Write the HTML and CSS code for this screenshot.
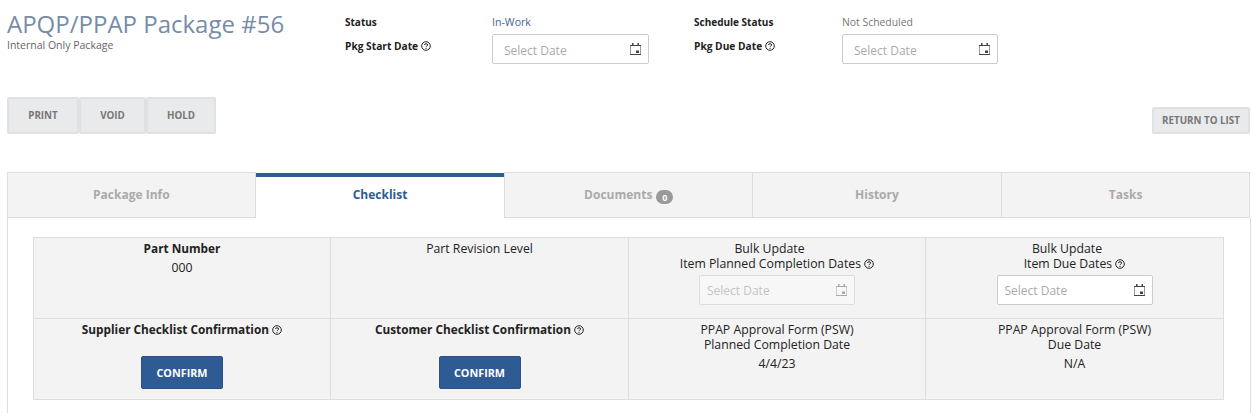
FILE: index.html
```html
<!DOCTYPE html>
<html lang="en">
<head>
<meta charset="utf-8">
<title>APQP/PPAP Package #56</title>
<link rel="stylesheet" href="styles.css">
</head>
<body>
<svg class="sprites" width="0" height="0" aria-hidden="true">
  <symbol id="cal" viewBox="0 0 11 12">
    <path d="M.5 2.500h10v9H.5z" fill="none" stroke="currentColor" stroke-opacity=".55"/>
    <path d="M0 2h11v1H0zM2 0h1.500v2H2zM7.500 0H9v2H7.500zM0 11h11v1H0zM6 7.500h3V10H6z" fill="currentColor"/>
  </symbol>
  <symbol id="help" viewBox="0 0 10 10">
    <circle cx="5" cy="5" r="4.300" fill="none" stroke="currentColor" stroke-width="1"/>
    <path d="M3.500 4C3.500 2.300 6.600 2.300 6.600 4 6.600 5.100 5 5 5 6.200" fill="none" stroke="currentColor" stroke-width="1"/>
    <circle cx="5" cy="7.500" r=".6" fill="currentColor"/>
  </symbol>
</svg>
<header class="top">
  <div class="heading">
    <h1>APQP/PPAP Package #56</h1>
    <p>Internal Only Package</p>
  </div>
  <div class="meta">
    <span class="label row1">Status</span>
    <span class="value status row1">In-Work</span>
    <span class="label row1">Schedule Status</span>
    <span class="value row1">Not Scheduled</span>
    <span class="label">Pkg Start Date <svg class="help"><use href="#help"/></svg></span>
    <div class="date wide"><span>Select Date</span><svg class="cal"><use href="#cal"/></svg></div>
    <span class="label">Pkg Due Date <svg class="help"><use href="#help"/></svg></span>
    <div class="date wide"><span>Select Date</span><svg class="cal"><use href="#cal"/></svg></div>
  </div>
</header>
<div class="actions">
  <div class="group">
    <button class="btn">PRINT</button>
    <button class="btn">VOID</button>
    <button class="btn">HOLD</button>
  </div>
  <button class="btn return">RETURN TO LIST</button>
</div>
<nav class="tabs">
  <a class="tab">Package Info</a>
  <a class="tab active">Checklist</a>
  <a class="tab">Documents <span class="badge">0</span></a>
  <a class="tab">History</a>
  <a class="tab">Tasks</a>
</nav>
<main class="panel">
  <div class="table">
    <div class="cell cell-top"><strong>Part Number</strong><div class="line">000</div></div>
    <div class="cell cell-top">Part Revision Level</div>
    <div class="cell cell-top"><span class="bulk">Bulk Update</span><br>Item Planned Completion Dates <svg class="help"><use href="#help"/></svg>
      <div class="date small disabled"><span>Select Date</span><svg class="cal"><use href="#cal"/></svg></div>
    </div>
    <div class="cell cell-top"><span class="bulk">Bulk Update</span><br>Item Due Dates <svg class="help"><use href="#help"/></svg>
      <div class="date small"><span>Select Date</span><svg class="cal"><use href="#cal"/></svg></div>
    </div>
    <div class="cell"><strong>Supplier Checklist Confirmation</strong> <svg class="help"><use href="#help"/></svg>
      <button class="confirm">CONFIRM</button></div>
    <div class="cell"><strong>Customer Checklist Confirmation</strong> <svg class="help"><use href="#help"/></svg>
      <button class="confirm">CONFIRM</button></div>
    <div class="cell">PPAP Approval Form (PSW)<br>Planned Completion Date<div class="line">4/4/23</div></div>
    <div class="cell">PPAP Approval Form (PSW)<br>Due Date<div class="line">N/A</div></div>
  </div>
</main>
</body>
</html>
```
FILE: styles.css
```css
* { box-sizing: border-box; }
html, body { margin: 0; height: 413px; overflow: hidden; }
body { background: #fff; font-family: "Open Sans", sans-serif; font-size: 12px; color: #333; }
.sprites { position: absolute; }

.top { display: flex; padding: 8px 0 0 7px; height: 97px; }
.heading { width: 338px; }
h1 { margin: 0; font-size: 24px; line-height: 32px; font-weight: 400; color: #768ca8; white-space: nowrap; }
.heading p { margin: -1px 0 0; font-size: 10.500px; line-height: 13px; color: #666; }

.meta { display: grid; grid-template-columns: 147px 202px 148px 156px; grid-template-rows: 23px 30px; margin-top: 3px; align-items: start; }
.label { font-size: 10.200px; font-weight: 700; color: #222; line-height: 24px; white-space: nowrap; }
.label.row1 { line-height: 22px; font-size: 10px; }
.value { font-size: 10.400px; line-height: 22px; color: #777; }
.status { color: #3f6593; font-size: 10.600px; }

.help { width: 10px; height: 10px; color: #222; vertical-align: -1px; }
.cal { width: 11px; height: 12px; color: #444; flex: none; }

.date { display: flex; align-items: center; justify-content: space-between; border: 1px solid #ccc; border-radius: 2px; background: #fff; color: #aaa; font-size: 12px; }
.date.wide { width: 157px; height: 30px; padding: 0 7px 0 11px; }
.date.wide span { margin-top: 2px; }
.date.wide:last-child { width: 156px; }
.date.small { width: 156px; height: 30px; margin: 4px auto 0; padding: 0 7px; }
.date.disabled { background: #f7f7f7; border-color: #ddd; color: #c4c4c4; }
.date.disabled .cal { color: #aaa; }

.actions { display: flex; justify-content: space-between; align-items: flex-start; padding: 0 2px 0 7px; height: 75px; }
.group { display: flex; }
.btn { height: 37px; border: 2px solid #e0e1e3; background: #e9eaec; border-radius: 2px; font: 700 9.800px "Open Sans", sans-serif; color: #777; padding: 0 0 1px; }
.group .btn:nth-child(1) { width: 72px; }
.group .btn:nth-child(2) { width: 67px; }
.group .btn:nth-child(3) { width: 70px; }
.return { width: 98px; height: 27px; margin-top: 10px; }

.tabs { display: grid; grid-template-columns: repeat(5, 1fr); margin-left: 7px; width: 1243.500px; height: 46px; }
.tab { display: flex; align-items: center; justify-content: center; gap: 4px; padding-bottom: 2px; background: #f3f3f3; border: 1px solid #ddd; border-left-width: 0; font-size: 12px; font-weight: 700; color: #aaa; }
.tab:first-child, .active + .tab { border-left-width: 1px; }
.tab.active { background: #fff; color: #2f5b94; border: 0; border-top: 4px solid #2f5b94; margin-top: 1px; padding-bottom: 7px; }
.badge { display: inline-flex; align-items: center; justify-content: center; width: 17px; height: 14px; border-radius: 7px; background: #999; color: #fff; font-size: 9px; margin-top: 6px; }

.panel { margin-left: 7px; width: 1244px; height: 196px; border-left: 1px solid #ddd; border-right: 1px solid #ddd; padding: 19px 0 0 25px; }
.table { display: grid; grid-template-columns: 297px 298px 297px 298px; grid-template-rows: 81px 81px; width: 1191px; border: 1px solid #ddd; border-width: 1px 0 0 1px; }
.cell { background: #f3f3f3; border: 1px solid #ddd; border-width: 0 1px 1px 0; text-align: center; font-size: 12.250px; line-height: 15px; padding-top: 3px; color: #222; }
.cell strong { font-weight: 700; font-size: 11.800px; }
.bulk { padding-right: 15px; }
.line { margin-top: 4px; }
.confirm { display: block; width: 82px; height: 33px; margin: 19px auto 0; background: #2f5b94; color: #fff; border: 1px solid #2a5285; border-radius: 2px; font: 700 10.800px "Open Sans", sans-serif; }
```
